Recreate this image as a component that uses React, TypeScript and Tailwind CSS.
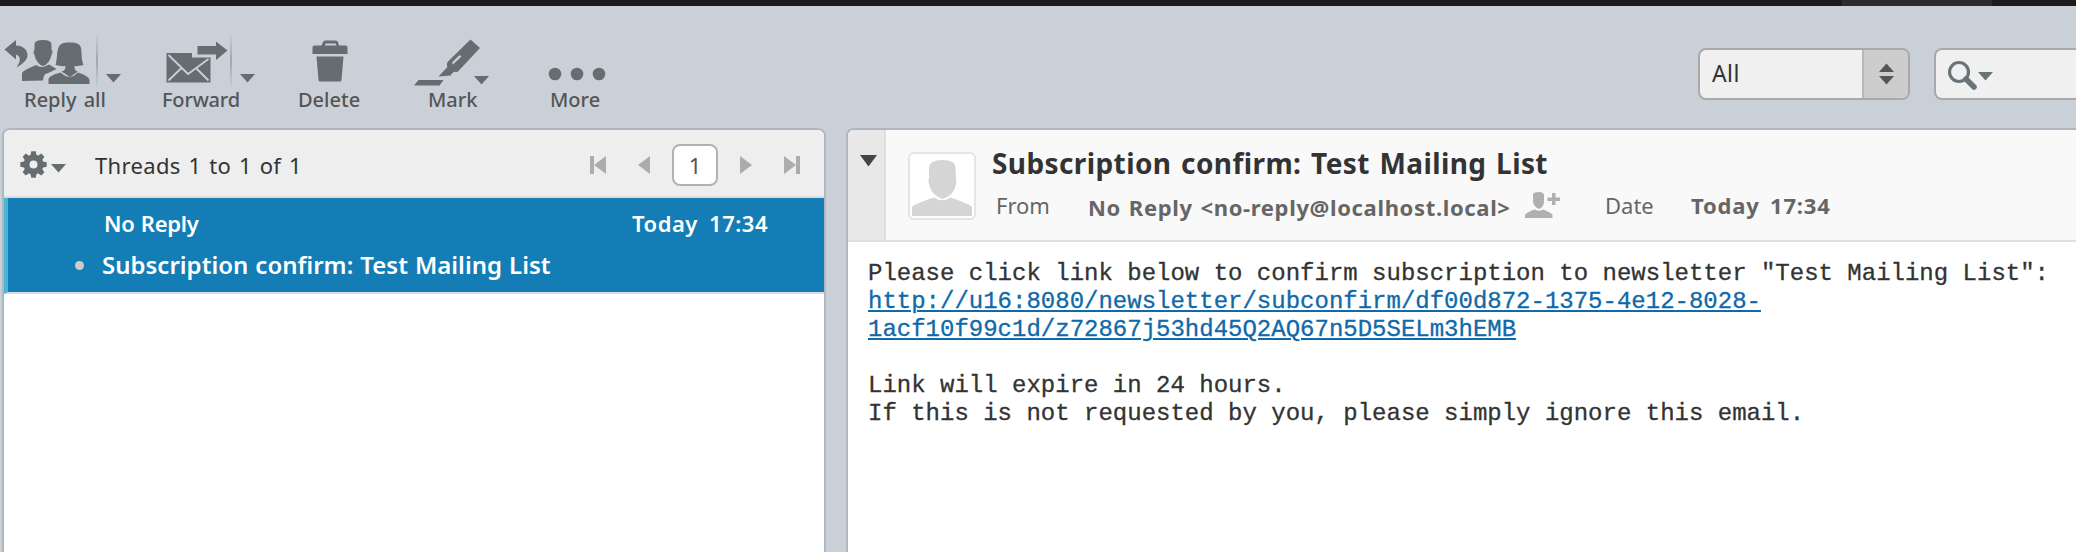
import type { ReactNode } from "react";

function Caret({ className = "" }: { className?: string }) {
  return (
    <svg className={className} width="15" height="9" viewBox="0 0 15 9">
      <path d="M0 0H15L7.5 8.5Z" fill="currentColor" />
    </svg>
  );
}

function ReplyAllIcon() {
  return (
    <svg width="86" height="48" viewBox="4 38 86 48" fill="#666d70">
      <path d="M4.500 49.500L16 40V45.500C24 46 27.500 50 27.500 55.500C27.500 60 22 64.500 16.500 67.500C20 62.500 22 56.500 16 54.500V59.500Z" />
      <path d="M34.500 44Q35 40 43 40Q51 40 51.500 44V50Q53.500 51 51.500 55Q49.500 64 43 66Q36.500 64 34.500 55Q32.500 52 34.500 50Z" />
      <path d="M22 81V73Q23 70.500 36 65Q42 69 49 64.500L56.500 69Q51 72 45.500 74Q43.500 75 43 80.500Z" />
      <path d="M55.500 65C57.500 59 56.500 51 59 46.500C61 42.500 66 42.500 70 42.500C77 42.500 80 44 81 48C82 53 81 59 83.500 65Q78 66.500 74.500 66C74.500 69 75 71 78 71.500L70 77L61.500 71.500C64.500 71 65.500 69 65.500 66Q60 66.500 55.500 65Z" />
      <path d="M48.500 84V79Q49 75.500 60.500 72.500Q70 81 78 72.500Q89 76 89.500 80V84Z" />
    </svg>
  );
}

function ForwardIcon() {
  return (
    <svg width="62" height="43" viewBox="166 41 62 43" fill="#666d70">
      <path d="M197.500 46H216V41.500L227.500 50.500L216 60V54.500H197.500Z" />
      <path d="M166.500 53H192V57.500H210.500V82.500H166.500Z" />
      <path d="M168.500 55L188 74L208.500 59M168.500 80.500L182 67.500M208.500 80.500L196 68" fill="none" stroke="#c9d0d8" strokeWidth="1.800" />
    </svg>
  );
}

function DeleteIcon() {
  return (
    <svg width="36" height="42" viewBox="312 40 36 42" fill="#666d70">
      <path d="M314 45.500H321.500L323 42Q323.500 40.500 325 40.500H335.500Q337.500 40.500 338 42L339 45.500H346Q347.500 45.500 347.500 48V54H312.500V48Q312.500 45.500 314 45.500ZM325 45.500H336.500L335.500 43.500H325.500Z" fillRule="evenodd" />
      <path d="M316.500 56.500H343.500L341.500 80Q341.500 81.500 340 81.500H320Q318.500 81.500 318.500 80Z" />
    </svg>
  );
}

function MarkIcon() {
  return (
    <svg width="66" height="47" viewBox="414 39 66 47" fill="#666d70">
      <path d="M470.500 39.500L480 48L457.500 72Q453 70.500 450.500 75.500L438.500 76.500L447.500 67Q446 64 448 61.500ZM453 64.500L461.500 56.500L459.500 55L452 62.500Z" fillRule="evenodd" />
      <path d="M418.500 80H443.500L439.500 85.500H414Z" />
    </svg>
  );
}

function MoreIcon() {
  return (
    <svg width="58" height="14" viewBox="0 0 58 14" fill="#666d70">
      <circle cx="7" cy="7" r="6.300" />
      <circle cx="29" cy="7" r="6.300" />
      <circle cx="51" cy="7" r="6.300" />
    </svg>
  );
}

function Divider() {
  return <span className="h-[58px] w-[2px] bg-linear-to-b from-transparent via-[#a4a8ac] to-transparent" />;
}

function Tool({ className, label, labelClass, children }: { className: string; label: string; labelClass: string; children: ReactNode }) {
  return (
    <button className={`flex h-full shrink-0 flex-col items-start ${className}`}>
      <span className="flex h-[81px] w-full items-start">{children}</span>
      <span className={`whitespace-nowrap text-[20px] leading-[26px] font-medium text-[#555] ${labelClass}`}>{label}</span>
    </button>
  );
}

function Toolbar() {
  return (
    <header className="flex h-[122px] shrink-0 items-start">
      <Tool className="w-[162px]" label="Reply all" labelClass="pl-[24px] [word-spacing:2px]">
        <span className="pt-[32px] pl-1"><ReplyAllIcon /></span>
        <span className="flex pt-[26px] pl-[6px]"><Divider /></span>
        <Caret className="mt-[68px] ml-[8px] text-[#666d70]" />
      </Tool>
      <Tool className="w-[136px]" label="Forward" labelClass="-tracking-[0.2px]">
        <span className="pt-[35px] pl-1"><ForwardIcon /></span>
        <span className="flex pt-[26px] pl-[2px]"><Divider /></span>
        <Caret className="mt-[68px] ml-[8px] text-[#666d70]" />
      </Tool>
      <Tool className="w-[116px]" label="Delete" labelClass="">
        <span className="pt-[34px] pl-[14px]"><DeleteIcon /></span>
      </Tool>
      <Tool className="w-[134px]" label="Mark" labelClass="pl-[14px]">
        <span className="pt-[33px]"><MarkIcon /></span>
        <Caret className="mt-[70px] -ml-[6px] text-[#666d70]" />
      </Tool>
      <Tool className="w-[62px]" label="More" labelClass="pl-[2px]">
        <span className="pt-[61px]"><MoreIcon /></span>
      </Tool>
      <div className="mt-[42px] ml-auto flex h-[52px] w-[212px] shrink-0 overflow-hidden rounded-lg border-2 border-[#a9a9a9] bg-[#f0f0f0]">
        <span className="flex-1 pl-3 text-[23px] leading-[47px] text-[#333] tracking-[0.4px]">All</span>
        <span className="flex w-[46px] flex-col items-center justify-center gap-1 border-l-2 border-[#b9b9b9] bg-[#cdcdcd] text-[#555]">
          <Caret className="rotate-180" />
          <Caret />
        </span>
      </div>
      <div className="mt-[42px] ml-6 flex h-[52px] w-[142px] shrink-0 rounded-l-lg border-2 border-r-0 border-[#a9a9a9] bg-[#f0f0f0] text-[#6a7377]">
        <svg className="mt-[10px] ml-3" width="29" height="30" viewBox="0 0 29 30" fill="none" stroke="currentColor">
          <circle cx="11" cy="12" r="9.500" strokeWidth="3.200" />
          <path d="M18 19L26 27" strokeWidth="5.500" strokeLinecap="round" />
        </svg>
        <Caret className="mt-[22px] ml-[1px]" />
      </div>
    </header>
  );
}

function PageArrow({ bar = false, flip = false, className = "" }: { bar?: boolean; flip?: boolean; className?: string }) {
  return (
    <svg className={`${className} ${flip ? "rotate-180" : ""}`} width={bar ? 16 : 12} height="18" viewBox={bar ? "0 0 16 18" : "4 0 12 18"} fill="#acacac">
      {bar && <path d="M0 0H4V18H0Z" />}
      <path d="M16 0V18L4 9Z" />
    </svg>
  );
}

function GearIcon() {
  const teeth = [0, 45, 90, 135, 180, 225, 270, 315];
  return (
    <svg width="27" height="27" viewBox="-13.500 -13.500 27 27">
      <circle r="7" fill="none" stroke="#666d70" strokeWidth="6" />
      {teeth.map((a) => (
        <path key={a} d="M-3.200 -8.500L-2.200 -13.200H2.200L3.200 -8.500Z" fill="#666d70" transform={`rotate(${a})`} />
      ))}
    </svg>
  );
}

function ThreadList() {
  return (
    <section className="flex w-[824px] shrink-0 flex-col overflow-hidden rounded-t-lg border-2 border-b-0 border-[#aeb6c0] bg-white">
      <div className="flex h-[68px] shrink-0 items-start border-b-2 border-[#dedede] bg-[#eeeeee]">
        <span className="mt-[21px] ml-[16px]"><GearIcon /></span>
        <Caret className="mt-[34px] ml-1 text-[#666d70]" />
        <span className="mt-[19px] ml-[29px] w-[495px] whitespace-nowrap text-[22px] leading-8 text-[#333] tracking-[0.35px] [word-spacing:1.7px]">Threads 1 to 1 of 1</span>
        <PageArrow bar className="mt-[26px]" />
        <PageArrow className="mt-[26px] ml-8" />
        <span className="mt-[14px] ml-[22px] h-[42px] w-[46px] rounded-lg border-2 border-[#b1b1b1] bg-white text-center text-[22px] leading-[39px] text-[#555]">1</span>
        <PageArrow flip className="mt-[26px] ml-[22px]" />
        <PageArrow bar flip className="mt-[26px] ml-8" />
      </div>
      <div className="flex h-[96px] shrink-0 flex-col border-b-2 border-l-4 border-b-[#dddddd] border-l-[#4db4d4] bg-[#147db5] font-semibold text-white">
        <div className="flex pt-[9px] pr-[56px] pl-[96px] text-[22px] leading-8">
          <span className="-tracking-[0.3px] [word-spacing:1px]">No Reply</span>
          <span className="ml-auto tracking-[0.5px] [word-spacing:5px]">Today 17:34</span>
        </div>
        <div className="flex items-center pt-[10px] pl-[67px]">
          <span className="size-[9px] rounded-full bg-[#cccccc]" />
          <span className="ml-[18px] whitespace-nowrap text-[24px] leading-8 [word-spacing:0.8px]">Subscription confirm: Test Mailing List</span>
        </div>
      </div>
    </section>
  );
}

function Avatar() {
  return (
    <div className="mt-[22px] ml-[22px] size-[68px] shrink-0 rounded-md border-2 border-[#e5e5e5] bg-white">
      <svg width="64" height="64" viewBox="0 0 64 64" fill="#d5d5d5">
        <path d="M19 13Q20 6 32.500 6Q45 6 45.500 13L46 24Q47 27 45.500 32Q44 41 32.500 45Q22 41 20 33Q17.500 27 19 24Z" />
        <path d="M2 62V53Q4 50 24 43.500Q32 49 40.500 43.500Q60 50 62 53V62Z" />
      </svg>
    </div>
  );
}

function AddContactIcon() {
  return (
    <svg className="mt-[62px] shrink-0" width="36" height="26" viewBox="0 0 36 26" fill="#b0b0b0">
      <path d="M8 2Q9 0 14 0Q18.500 0 19 3V9Q19 15 14 17Q8.500 15 8 9Z" />
      <path d="M0 26V23Q1 20.500 9.500 17.500Q14 20 18 17.500Q26.500 20.500 27.500 23V26Z" />
      <path d="M27 1H30.500V5.500H35V9H30.500V13H27V9H22.500V5.500H27Z" />
    </svg>
  );
}

function Message() {
  return (
    <section className="ml-5 flex min-w-0 flex-1 flex-col overflow-hidden rounded-tl-lg border-t-2 border-l-2 border-[#aeb6c0] bg-white">
      <div className="flex h-[112px] shrink-0 border-b-2 border-[#dfdfdf] bg-[#f9f9f9]">
        <div className="w-[38px] shrink-0 border-r-2 border-[#dfdfdf] bg-[#e8e8e8]">
          <svg className="mt-[25px] ml-3" width="17" height="12" viewBox="0 0 17 12">
            <path d="M0 0H17L8.500 11.500Z" fill="#454545" />
          </svg>
        </div>
        <Avatar />
        <div className="ml-4 flex shrink-0 flex-col">
          <h1 className="mt-[13px] whitespace-nowrap text-[28px] leading-10 font-bold text-[#333] tracking-[0.4px] [word-spacing:2px]">Subscription confirm: Test Mailing List</h1>
          <div className="mt-[6px] flex h-8 items-start text-[22px] leading-8 text-[#666]">
            <span className="ml-1 w-[92px] shrink-0">From</span>
            <span className="mt-[2px] w-[437px] shrink-0 whitespace-nowrap font-bold tracking-[0.65px] [word-spacing:1.5px]">No Reply &lt;no-reply@localhost.local&gt;</span>
            <AddContactIconSlot />
            <span className="ml-[44px] w-[86px] shrink-0">Date</span>
            <span className="whitespace-nowrap font-bold tracking-[0.8px] [word-spacing:4px]">Today 17:34</span>
          </div>
        </div>
      </div>
      <div className="pt-[18px] pl-5 font-['Liberation_Mono','Courier_New',monospace] text-[24px] leading-7 whitespace-pre text-[#333] [-webkit-text-stroke:0.3px]">
        <p>{'Please click link below to confirm subscription to newsletter "Test Mailing List":'}</p>
        <a className="text-[#1069a9] underline decoration-2 underline-offset-2">{"http://u16:8080/newsletter/subconfirm/df00d872-1375-4e12-8028-\n1acf10f99c1d/z72867j53hd45Q2AQ67n5D5SELm3hEMB"}</a>
        <p className="pt-7">Link will expire in 24 hours.</p>
        <p>If this is not requested by you, please simply ignore this email.</p>
      </div>
    </section>
  );
}

function AddContactIconSlot() {
  return (
    <span className="-mt-[59px] shrink-0">
      <AddContactIcon />
    </span>
  );
}

export default function App() {
  return (
    <div className="flex h-[552px] w-full flex-col overflow-hidden bg-[#c9d0d8] font-['Noto_Sans','Open_Sans',sans-serif]">
      <div className="flex h-[6px] shrink-0 justify-end bg-[#1c1c1c]">
        <span className="mr-[84px] w-[150px] bg-[#2c2c2c]" />
      </div>
      <Toolbar />
      <main className="flex min-h-0 flex-1 pl-[2px]">
        <ThreadList />
        <Message />
      </main>
    </div>
  );
}
